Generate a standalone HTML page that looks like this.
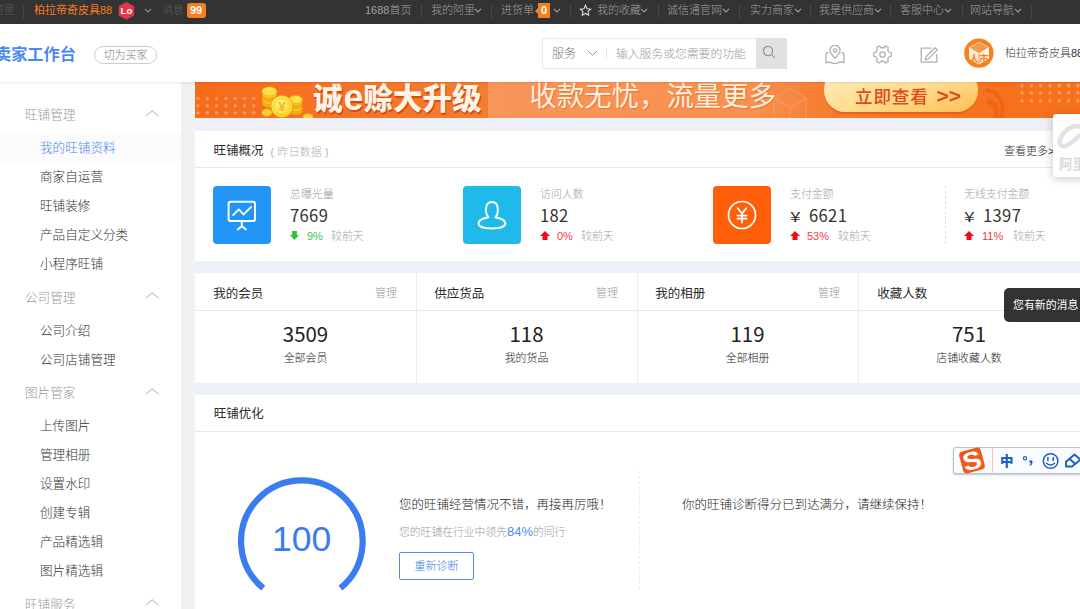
<!DOCTYPE html>
<html lang="zh-CN">
<head>
<meta charset="utf-8">
<title>卖家工作台</title>
<style>
*{box-sizing:border-box;margin:0;padding:0}
html,body{width:1080px;height:609px;overflow:hidden;background:#f0f0f0}
body{font-family:"Liberation Sans","Noto Sans CJK SC",sans-serif;font-size:12.5px;color:#333;position:relative;font-weight:300}
.abs{position:absolute;white-space:nowrap}
/* top bar */
#topbar{position:absolute;left:0;top:0;width:1080px;height:24px;background:#333;color:#a0a0a0;font-size:11px;line-height:24px}
#topbar .t{position:absolute;top:0;white-space:nowrap;line-height:21px}
#topbar .sep{position:absolute;top:5px;width:1px;height:13px;background:#474747}
#topbar svg.cv{position:absolute;top:8px}
/* header */
#header{position:absolute;left:0;top:24px;width:1080px;height:58px;background:#fff;box-shadow:0 1px 2px rgba(0,0,0,.09);z-index:5}
/* sidebar */
#side{position:absolute;left:0;top:82px;width:181px;height:527px;background:#fff}
#side .g{position:absolute;left:25px;color:#999;font-size:12.6px;line-height:20px;white-space:nowrap}
#side .i{position:absolute;left:40px;color:#333;font-size:12.6px;line-height:20px;white-space:nowrap}
#side .act{position:absolute;left:0;width:181px;height:29px;background:#fbfbfd}
#side svg{position:absolute;left:145px}
/* main */
#main{position:absolute;left:194px;top:82px;width:886px;height:527px;background:#edf0f9}
.card{position:absolute;background:#fff}
.hline{position:absolute;left:0;height:1px;background:#e8e8e8}
.vline{position:absolute;top:0;width:1px;background:#ececec}
.g9{color:#999}
.ttl{font-size:12.5px;line-height:18px;color:#2a2a2a;font-weight:400}
.num{font-family:"Noto Sans CJK SC",sans-serif;font-weight:400;font-size:16.6px;letter-spacing:.35px;color:#333;line-height:20px}
.yen{font-family:"Noto Sans CJK SC",sans-serif;font-weight:400;font-size:14px;color:#333;line-height:20px;transform:scaleX(1.38);transform-origin:0 50%}
.lab{font-size:10.900px;color:#a2a2a2;line-height:14px}
.big{font-family:"Noto Sans CJK SC",sans-serif;font-weight:400;font-size:20.4px;color:#222;line-height:24px;text-align:center}
.sm{font-size:10.900px;color:#222;line-height:14px;text-align:center}
</style>
</head>
<body>

<!-- ================= TOP BAR ================= -->
<div id="topbar">
  <span class="t" style="left:-7px;color:#5a5a5a">阿里</span>
  <span class="sep" style="left:23px"></span>
  <span class="t" style="left:34px;color:#fa7a1c;font-weight:400">柏拉帝奇皮具88</span>
  <svg class="abs" style="left:118px;top:1.500px" width="17" height="18" viewBox="0 0 17 18"><polygon points="8.400,1 15.300,4.800 15.300,13 8.400,16.800 1.500,13 1.500,4.800" fill="#e0364a" stroke="#e0364a" stroke-width="1.600" stroke-linejoin="round"/><text x="8.400" y="12.300" font-size="9.500" font-weight="700" fill="#fff" text-anchor="middle" font-family="Liberation Sans, sans-serif">Lo</text></svg>
  <svg class="cv" style="left:144px" width="8" height="6" viewBox="0 0 8 6"><path d="M1 1l3 3 3-3" fill="none" stroke="#888" stroke-width="1.2"/></svg>
  <span class="t" style="left:162px;color:#5a5a5a">消息</span>
  <span class="abs" style="left:186.500px;top:3px;width:19px;height:15px;background:#f7801e;border-radius:3px;color:#fff;font-weight:700;font-size:11px;line-height:15px;text-align:center">99</span>

  <span class="t" style="left:365px">1688首页</span>
  <span class="sep" style="left:421px"></span>
  <span class="t" style="left:431px">我的阿里</span>
  <svg class="cv" style="left:474px" width="8" height="6" viewBox="0 0 8 6"><path d="M1 1l3 3 3-3" fill="none" stroke="#999" stroke-width="1.1"/></svg>
  <span class="sep" style="left:491px"></span>
  <span class="t" style="left:501px">进货单</span>
  <span class="abs" style="left:538px;top:3px;width:12px;height:15px;background:#f7801e;color:#fff;font-weight:700;font-size:11px;line-height:15px;text-align:center">0</span>
  <span class="abs" style="left:535px;top:8px;width:0;height:0;border:3px solid transparent;border-right-color:#f7801e;border-left:0"></span>
  <svg class="cv" style="left:553px" width="8" height="6" viewBox="0 0 8 6"><path d="M1 1l3 3 3-3" fill="none" stroke="#999" stroke-width="1.1"/></svg>
  <span class="sep" style="left:570px"></span>
  <svg class="abs" style="left:579px;top:4px" width="13" height="13" viewBox="0 0 24 24"><path d="M12 2.5l2.9 6.2 6.6.8-4.9 4.6 1.3 6.7L12 17.5l-5.9 3.3 1.3-6.7-4.9-4.6 6.6-.8z" fill="none" stroke="#ddd" stroke-width="2"/></svg>
  <span class="t" style="left:597px">我的收藏</span>
  <svg class="cv" style="left:640px" width="8" height="6" viewBox="0 0 8 6"><path d="M1 1l3 3 3-3" fill="none" stroke="#999" stroke-width="1.1"/></svg>
  <span class="sep" style="left:658px"></span>
  <span class="t" style="left:667px">诚信通官网</span>
  <svg class="cv" style="left:722px" width="8" height="6" viewBox="0 0 8 6"><path d="M1 1l3 3 3-3" fill="none" stroke="#999" stroke-width="1.1"/></svg>
  <span class="sep" style="left:739px"></span>
  <span class="t" style="left:750px">实力商家</span>
  <svg class="cv" style="left:794px" width="8" height="6" viewBox="0 0 8 6"><path d="M1 1l3 3 3-3" fill="none" stroke="#999" stroke-width="1.1"/></svg>
  <span class="sep" style="left:810px"></span>
  <span class="t" style="left:819px">我是供应商</span>
  <svg class="cv" style="left:874px" width="8" height="6" viewBox="0 0 8 6"><path d="M1 1l3 3 3-3" fill="none" stroke="#999" stroke-width="1.1"/></svg>
  <span class="sep" style="left:890px"></span>
  <span class="t" style="left:900px">客服中心</span>
  <svg class="cv" style="left:944px" width="8" height="6" viewBox="0 0 8 6"><path d="M1 1l3 3 3-3" fill="none" stroke="#999" stroke-width="1.1"/></svg>
  <span class="sep" style="left:962px"></span>
  <span class="t" style="left:970px">网站导航</span>
  <svg class="cv" style="left:1014px" width="8" height="6" viewBox="0 0 8 6"><path d="M1 1l3 3 3-3" fill="none" stroke="#999" stroke-width="1.1"/></svg>
  <span class="sep" style="left:1031px"></span>
</div>

<!-- ================= HEADER ================= -->
<div id="header">
  <span class="abs" style="left:-5px;top:19px;font-size:16.2px;font-weight:700;color:#4a88f4;line-height:22px">卖家工作台</span>
  <span class="abs" style="left:94px;top:22px;width:63px;height:18px;border:1px solid #cdcdcd;border-radius:9px;font-size:10.900px;color:#7a7a7a;line-height:16px;text-align:center">切为买家</span>

  <div class="abs" style="left:542px;top:13.500px;width:245px;height:31.500px;border:1px solid #ebebeb;background:#fff"></div>
  <span class="abs" style="left:552px;top:21px;font-size:12px;color:#777;line-height:18px">服务</span>
  <svg class="abs" style="left:587px;top:26px" width="11" height="7" viewBox="0 0 11 7"><path d="M0.800 0.800l4.700 4.500 4.700-4.500" fill="none" stroke="#9a9a9a" stroke-width="1"/></svg>
  <span class="abs" style="left:606px;top:25px;width:1px;height:9px;background:#e6e6e6"></span>
  <span class="abs" style="left:616px;top:21px;font-size:11.8px;color:#999;line-height:18px">输入服务或您需要的功能</span>
  <div class="abs" style="left:756px;top:13.500px;width:31px;height:31.500px;background:#e1e1e1"></div>
  <svg class="abs" style="left:761.500px;top:20.500px" width="14" height="14" viewBox="0 0 14 14"><circle cx="6" cy="6" r="4.600" fill="none" stroke="#909090" stroke-width="1.200"/><path d="M9.400 9.400l3.200 3.200" stroke="#909090" stroke-width="1.200"/></svg>

  <!-- map icon -->
  <svg class="abs" style="left:824px;top:21px" width="23" height="21" viewBox="0 0 23 21"><g fill="none" stroke="#b0b0b0" stroke-width="1.300" stroke-linejoin="round" stroke-linecap="round"><path d="M11 13.200C8 9.800 5.900 7.600 5.900 5.400a5.100 5.100 0 0 1 10.200 0c0 2.200-2.100 4.400-5.100 7.800z"/><circle cx="11" cy="5.500" r="1.700"/><path d="M4.300 7.600C2.800 7.700 2 8.400 2 9.600v8.300c2-.9 4-.9 6 0 2.200 1 4.200.8 6-.2 2-.9 4-.9 6-.1V9.600c0-1.200-.8-1.900-2.300-2"/></g></svg>
  <!-- gear -->
  <svg class="abs" style="left:872px;top:20px" width="21" height="21" viewBox="0 0 21 21"><g fill="none" stroke="#b0b0b0" stroke-width="1.300" stroke-linejoin="round"><path d="M17.02 8.25 L19.36 8.94 L19.36 12.06 L17.02 12.75 L15.71 15.03 L16.29 17.39 L13.58 18.96 L11.82 17.27 L9.18 17.27 L7.42 18.96 L4.71 17.39 L5.29 15.03 L3.98 12.75 L1.64 12.06 L1.64 8.94 L3.98 8.25 L5.29 5.97 L4.71 3.61 L7.42 2.04 L9.18 3.73 L11.82 3.73 L13.58 2.04 L16.29 3.61 L15.71 5.97z"/><circle cx="10.500" cy="10.500" r="2.700"/></g></svg>
  <!-- edit -->
  <svg class="abs" style="left:920px;top:22.500px" width="19" height="17" viewBox="0 0 19 17"><g fill="none" stroke="#b0b0b0" stroke-width="1.300" stroke-linejoin="round" stroke-linecap="round"><path d="M11 1.200H1.200v14h15.600V7.500"/><path d="M15 .8l2.300 2.100-9 9-3.100.9.800-3z"/></g></svg>
  <!-- avatar -->
  <svg class="abs" style="left:964px;top:14px" width="30" height="30" viewBox="0 0 30 30"><circle cx="14.900" cy="15.100" r="14.700" fill="#f5811f"/><path d="M15 4.200l10 5.400-10 5.900-10-5.900z" fill="#f7994a" stroke="#fde2c8" stroke-width=".8" stroke-linejoin="round"/><path d="M5 9.600l10 5.900v11l-10-5.800z" fill="#fdebd9"/><path d="M15 15.500l10-5.900v11.100l-10 5.800z" fill="#fff1e4"/><path d="M15 15.500v11" stroke="#f5811f" stroke-width=".8"/><text x="10.200" y="23.600" font-size="9.500" font-weight="700" fill="#f5811f" text-anchor="middle" font-family="Liberation Sans, Noto Sans CJK SC, sans-serif">人</text><text x="19.900" y="23.600" font-size="9.500" font-weight="700" fill="#f5811f" text-anchor="middle" font-family="Liberation Sans, Noto Sans CJK SC, sans-serif">市</text></svg>
  <span class="abs" style="left:1005px;top:21px;font-size:11px;color:#333;line-height:16px">柏拉帝奇皮具88</span>
</div>

<!-- ================= SIDEBAR ================= -->
<div id="side">
  <span class="g" style="top:23px">旺铺管理</span>
  <svg style="top:27px" width="15" height="9" viewBox="0 0 15 9"><path d="M0.600 7.400l6.600-5.600 6.600 5.600" fill="none" stroke="#c6c6c6" stroke-width="1.200"/></svg>
  <div class="act" style="top:51px"></div>
  <span class="i" style="top:56px;color:#4a86f2">我的旺铺资料</span>
  <span class="i" style="top:85px">商家自运营</span>
  <span class="i" style="top:114px">旺铺装修</span>
  <span class="i" style="top:143px">产品自定义分类</span>
  <span class="i" style="top:172px">小程序旺铺</span>

  <span class="g" style="top:206px">公司管理</span>
  <svg style="top:209px" width="15" height="9" viewBox="0 0 15 9"><path d="M0.600 7.400l6.600-5.600 6.600 5.600" fill="none" stroke="#c6c6c6" stroke-width="1.200"/></svg>
  <span class="i" style="top:239px">公司介绍</span>
  <span class="i" style="top:268px">公司店铺管理</span>

  <span class="g" style="top:301px">图片管家</span>
  <svg style="top:305px" width="15" height="9" viewBox="0 0 15 9"><path d="M0.600 7.400l6.600-5.600 6.600 5.600" fill="none" stroke="#c6c6c6" stroke-width="1.200"/></svg>
  <span class="i" style="top:334px">上传图片</span>
  <span class="i" style="top:363px">管理相册</span>
  <span class="i" style="top:392px">设置水印</span>
  <span class="i" style="top:421px">创建专辑</span>
  <span class="i" style="top:450px">产品精选辑</span>
  <span class="i" style="top:479px">图片精选辑</span>

  <span class="g" style="top:513.300px">旺铺服务</span>
  <svg style="top:516px" width="15" height="9" viewBox="0 0 15 9"><path d="M0.600 7.400l6.600-5.600 6.600 5.600" fill="none" stroke="#c6c6c6" stroke-width="1.200"/></svg>
</div>

<!-- ================= MAIN ================= -->
<div class="abs" style="left:192.500px;top:82px;width:2px;height:527px;background:#f1f3f9"></div>
<div id="main">
  <!-- banner : main origin is (194,82) -->
  <div id="banner" class="abs" style="left:1px;top:0;width:885px;height:36px;overflow:hidden;background:linear-gradient(90deg,#f66b1c 0,#f67c31 293px,#f8955a 293px,#f8914f 560px,#f78640 600px,#f77a2a 640px,#f7711d 800px,#f7711d 885px)">
    <svg class="abs" style="left:0;top:0" width="885" height="36" viewBox="0 0 885 36">
      <defs>
        <linearGradient id="btn" x1="0" y1="0" x2="1" y2="1"><stop offset="0" stop-color="#ffefc4"/><stop offset=".55" stop-color="#ffdc8e"/><stop offset="1" stop-color="#ffbe55"/></linearGradient>
        <radialGradient id="coin" cx="0.4" cy="0.35" r="0.75"><stop offset="0" stop-color="#fff47c"/><stop offset="1" stop-color="#ffd21e"/></radialGradient>
      </defs>
      <g fill="#f9a465" opacity=".85"><circle cx="3.0" cy="16.6" r="1.700"/><circle cx="12.3" cy="16.6" r="1.700"/><circle cx="21.6" cy="16.6" r="1.700"/><circle cx="30.9" cy="16.6" r="1.700"/><circle cx="40.2" cy="16.6" r="1.700"/><circle cx="49.5" cy="16.6" r="1.700"/><circle cx="58.8" cy="16.6" r="1.700"/><circle cx="3.0" cy="23.7" r="1.700"/><circle cx="12.3" cy="23.7" r="1.700"/><circle cx="21.6" cy="23.7" r="1.700"/><circle cx="30.9" cy="23.7" r="1.700"/><circle cx="40.2" cy="23.7" r="1.700"/><circle cx="49.5" cy="23.7" r="1.700"/><circle cx="58.8" cy="23.7" r="1.700"/><circle cx="3.0" cy="31" r="1.700"/><circle cx="12.3" cy="31" r="1.700"/><circle cx="21.6" cy="31" r="1.700"/><circle cx="30.9" cy="31" r="1.700"/><circle cx="40.2" cy="31" r="1.700"/><circle cx="49.5" cy="31" r="1.700"/><circle cx="58.8" cy="31" r="1.700"/><circle cx="827.0" cy="3.6" r="1.800"/><circle cx="836.3" cy="3.6" r="1.800"/><circle cx="845.6" cy="3.6" r="1.800"/><circle cx="854.9" cy="3.6" r="1.800"/><circle cx="864.2" cy="3.6" r="1.800"/><circle cx="873.5" cy="3.6" r="1.800"/><circle cx="882.8" cy="3.6" r="1.800"/><circle cx="827.0" cy="10.8" r="1.800"/><circle cx="836.3" cy="10.8" r="1.800"/><circle cx="845.6" cy="10.8" r="1.800"/><circle cx="854.9" cy="10.8" r="1.800"/><circle cx="864.2" cy="10.8" r="1.800"/><circle cx="873.5" cy="10.8" r="1.800"/><circle cx="882.8" cy="10.8" r="1.800"/><circle cx="827.0" cy="18.9" r="1.800"/><circle cx="836.3" cy="18.9" r="1.800"/><circle cx="845.6" cy="18.9" r="1.800"/><circle cx="854.9" cy="18.9" r="1.800"/><circle cx="864.2" cy="18.9" r="1.800"/><circle cx="873.5" cy="18.9" r="1.800"/><circle cx="882.8" cy="18.9" r="1.800"/></g>
      <g stroke="#ec9a08" stroke-width="0.600"><ellipse cx="71.900" cy="30.600" rx="5.200" ry="3.800" fill="#fbd02f"/><ellipse cx="74.4" cy="21.5" rx="7.2" ry="4" fill="#f5ae0e"/><ellipse cx="74.4" cy="18.5" rx="7.2" ry="4" fill="#fbc828"/><ellipse cx="74.4" cy="15.5" rx="7.2" ry="4" fill="#f5ae0e"/><ellipse cx="74.4" cy="12.5" rx="7.2" ry="4" fill="#fbc828"/><ellipse cx="74.4" cy="9.4" rx="7.5" ry="4.6" fill="#ffe247"/><ellipse cx="100.6" cy="29.5" rx="6.6" ry="3.3" fill="#f5ae0e"/><ellipse cx="100.6" cy="26.5" rx="6.6" ry="3.3" fill="#fbc828"/><ellipse cx="100.6" cy="23.5" rx="6.6" ry="3.3" fill="#f5ae0e"/><ellipse cx="100.6" cy="20.5" rx="6.6" ry="3.3" fill="#fbc828"/><ellipse cx="100.6" cy="17.5" rx="6.9" ry="3.9" fill="#ffe247"/>
        <ellipse cx="113" cy="34.600" rx="5.200" ry="3" fill="#fbd034"/>
        <circle cx="86.900" cy="24.400" r="11" fill="url(#coin)" stroke="#ef9f06" stroke-width=".8"/>
      </g>
      <circle cx="86.900" cy="24.400" r="8.200" fill="none" stroke="#f6c21a" stroke-width=".9" opacity=".8"/>
      <text x="86.900" y="29.300" font-size="13" font-weight="700" fill="#f2b010" opacity=".85" text-anchor="middle" font-family="Liberation Sans, sans-serif">¥</text>
      <!-- faint cube -->
      <g fill="none" stroke="#fab07c" stroke-width="1.800" opacity=".3"><path d="M579 16l16-9.500 16 9.500-16 9.500z"/><path d="M579 16v20M611 16v20M595 25.500v12"/></g>
      <!-- swirl right of the button -->
      <g fill="none" stroke="#ec5b16" opacity=".6" stroke-linecap="round"><path d="M792 8c12 2 19 13 14 28" stroke-width="4"/><path d="M794 20c6 1 9 7 7 16" stroke-width="5"/></g>
      <!-- button -->
      <rect x="629" y="-12" width="154" height="44" rx="21" fill="#e55a10" opacity=".7"/>
      <rect x="629" y="-14" width="154" height="44" rx="21" fill="url(#btn)"/>
    </svg>
    <span class="abs" style="left:118px;top:-3.500px;font-size:29.500px;font-weight:900;color:#fff4e6;line-height:40px;text-shadow:1px 2px 0 #d8490f,0 1px 1px #d8490f">诚<span style="font-weight:700;font-size:36px;margin:0 0 0 1px;line-height:20px;position:relative;top:1px">e</span>赊大升级</span>
    <span class="abs" style="left:334.500px;top:-5.200px;font-size:27.400px;font-weight:400;color:#fff0e0;line-height:40px;text-shadow:1px 1px 1px rgba(226,90,20,.55)">收款无忧，流量更多</span>
    <span class="abs" style="left:660px;top:-2.500px;font-size:17.600px;font-weight:500;color:#e6461a;line-height:32px;letter-spacing:.8px">立即查看<span style="font-weight:700;font-size:21px;margin-left:8px;letter-spacing:0;position:relative;top:.5px">&gt;&gt;</span></span>
  </div>

  <!-- card 1 : overview -->
  <div class="card" style="left:1px;top:49px;width:885px;height:130px">
    <span class="abs ttl" style="left:18.500px;top:11px">旺铺概况</span>
    <span class="abs" style="left:75.500px;top:12.500px;font-size:10.800px;line-height:16px;color:#b0b0b0;letter-spacing:.25px">( 昨日数据 )</span>
    <span class="abs" style="left:809px;top:12px;font-size:11px;line-height:16px;color:#333">查看更多&gt;</span>
    <div class="hline" style="top:36px;width:885px"></div>

    <!-- stat 1 -->
    <div class="abs" style="left:18px;top:55px;width:58px;height:58px;border-radius:4px;background:#2196f6"></div>
    <svg class="abs" style="left:32px;top:69px" width="30" height="32" viewBox="0 0 30 32"><g fill="none" stroke="#fff" stroke-width="2" stroke-linecap="round" stroke-linejoin="round"><rect x="1.600" y="1.700" width="26.400" height="19.300" rx="2"/><path d="M6.200 15l5.700-5.700 4.600 5.200L24 7" stroke-width="1.800"/><path d="M14.800 21.500v4.500M14.800 26l-4 3.400M14.800 26l4 3.400"/></g></svg>
    <span class="abs lab" style="left:95px;top:56px">总曝光量</span>
    <span class="abs num" style="left:95px;top:73.700px">7669</span>
    <svg class="abs" style="left:95px;top:99.500px" width="9" height="9" viewBox="0 0 9 9"><path d="M2.100 0h4.800v4H9L4.500 9 0 4h2.100z" fill="#2cc52f"/></svg>
    <span class="abs" style="left:112px;top:98px;font-size:11px;line-height:14px;color:#3cc83f">9%</span>
    <span class="abs lab" style="left:136px;top:98px">较前天</span>

    <!-- stat 2 -->
    <div class="abs" style="left:268px;top:55px;width:58px;height:58px;border-radius:4px;background:#1fb9ea"></div>
    <svg class="abs" style="left:281px;top:68.700px" width="32" height="32" viewBox="0 0 32 32"><path d="M15.900 2C12.300 2 10.100 4.600 10.100 8.200v3.400c0 2.500 1 4.500 2.300 5.700-5 1-9.900 2.900-9.900 6.300 0 3.100 6 4.900 13.400 4.900s13.400-1.800 13.400-4.900c0-3.400-4.900-5.300-9.900-6.300 1.300-1.200 2.300-3.200 2.300-5.700V8.200C21.700 4.600 19.500 2 15.900 2z" fill="none" stroke="#fff" stroke-width="1.900" stroke-linejoin="round"/></svg>
    <span class="abs lab" style="left:345px;top:56px">访问人数</span>
    <span class="abs num" style="left:345px;top:73.700px">182</span>
    <svg class="abs" style="left:345px;top:100px" width="10" height="9" viewBox="0 0 10 9"><path d="M5 0l5 5H7.500v4H2.500V5H0z" fill="#f00a14"/></svg>
    <span class="abs" style="left:362px;top:98px;font-size:11px;line-height:14px;color:#f03c44">0%</span>
    <span class="abs lab" style="left:386px;top:98px">较前天</span>

    <!-- stat 3 -->
    <div class="abs" style="left:518px;top:55px;width:58px;height:58px;border-radius:4px;background:#ff5f0a"></div>
    <svg class="abs" style="left:532.300px;top:69px" width="30" height="30" viewBox="0 0 30 30"><circle cx="15" cy="15" r="13.500" fill="none" stroke="#fff" stroke-width="1.700"/><g stroke="#fff" stroke-width="1.800" fill="none" stroke-linecap="round" stroke-linejoin="round"><path d="M10.700 8.200l4.300 5.400 4.300-5.400M15 13.600v8.900M10.400 15.600h9.200M10.400 18.600h9.200"/></g></svg>
    <span class="abs lab" style="left:595px;top:56px">支付金额</span>
    <span class="abs yen" style="left:595px;top:74.500px">¥</span><span class="abs num" style="left:614px;top:73.700px">6621</span>
    <svg class="abs" style="left:595px;top:100px" width="10" height="9" viewBox="0 0 10 9"><path d="M5 0l5 5H7.500v4H2.500V5H0z" fill="#f00a14"/></svg>
    <span class="abs" style="left:612px;top:98px;font-size:11px;line-height:14px;color:#f03c44">53%</span>
    <span class="abs lab" style="left:643px;top:98px">较前天</span>

    <div class="abs" style="left:750px;top:55px;width:0;height:58px;border-left:1px dashed #e2e2e2"></div>
    <!-- stat 4 -->
    <span class="abs lab" style="left:769px;top:56px">无线支付金额</span>
    <span class="abs yen" style="left:769px;top:74.500px">¥</span><span class="abs num" style="left:788px;top:73.700px">1397</span>
    <svg class="abs" style="left:769px;top:100px" width="10" height="9" viewBox="0 0 10 9"><path d="M5 0l5 5H7.500v4H2.500V5H0z" fill="#f00a14"/></svg>
    <span class="abs" style="left:787px;top:98px;font-size:11px;line-height:14px;color:#f03c44">11%</span>
    <span class="abs lab" style="left:818px;top:98px">较前天</span>
  </div>

  <!-- card 2 : four columns -->
  <div class="card" style="left:1px;top:191px;width:885px;height:110px">
    <div class="hline" style="top:37px;width:885px"></div>
    <div class="vline" style="left:221px;height:110px"></div>
    <div class="vline" style="left:442px;height:110px"></div>
    <div class="vline" style="left:663px;height:110px"></div>

    <span class="abs ttl" style="left:18.3px;top:11.500px">我的会员</span>
    <span class="abs g9" style="left:180px;top:12px;font-size:11px;line-height:16px">管理</span>
    <div class="abs big" style="left:0;top:48.4px;width:221px">3509</div>
    <div class="abs sm" style="left:0;top:78px;width:221px">全部会员</div>

    <span class="abs ttl" style="left:239.3px;top:11.500px">供应货品</span>
    <span class="abs g9" style="left:401px;top:12px;font-size:11px;line-height:16px">管理</span>
    <div class="abs big" style="left:221px;top:48.4px;width:221px">118</div>
    <div class="abs sm" style="left:221px;top:78px;width:221px">我的货品</div>

    <span class="abs ttl" style="left:460.3px;top:11.500px">我的相册</span>
    <span class="abs g9" style="left:623px;top:12px;font-size:11px;line-height:16px">管理</span>
    <div class="abs big" style="left:442px;top:48.4px;width:221px">119</div>
    <div class="abs sm" style="left:442px;top:78px;width:221px">全部相册</div>

    <span class="abs ttl" style="left:682.3px;top:11.500px">收藏人数</span>
    <div class="abs big" style="left:663px;top:48.4px;width:222px">751</div>
    <div class="abs sm" style="left:663px;top:78px;width:222px">店铺收藏人数</div>
  </div>

  <!-- card 3 : optimisation -->
  <div class="card" style="left:1px;top:313px;width:885px;height:214px">
    <span class="abs ttl" style="left:18.700px;top:10.300px">旺铺优化</span>
    <div class="hline" style="top:36px;width:885px"></div>

    <svg class="abs" style="left:36px;top:77.500px" width="142" height="139" viewBox="0 0 142 139">
      <path d="M32.260 115.130A60.800 60.800 0 1 1 109.440 115.130" fill="none" stroke="#3b7cf1" stroke-width="6.200"/>
      <text x="70.600" y="77.600" font-size="35.500" fill="#3b7cf1" text-anchor="middle" font-family="Liberation Sans, sans-serif">100</text>
    </svg>

    <span class="abs" style="left:204px;top:101px;font-size:12.500px;line-height:18px;color:#222">您的旺铺经营情况不错，再接再厉哦！</span>
    <span class="abs g9" style="left:204px;top:127px;font-size:10.800px;line-height:20px">您的旺铺在行业中领先<span style="color:#4b8cf4;font-size:13px">84%</span>的同行</span>
    <span class="abs" style="left:204px;top:157px;width:75px;height:28px;border:1px solid #4a8af4;border-radius:2px;font-size:11px;line-height:26px;color:#3b7cf1;text-align:center">重新诊断</span>

    <div class="abs" style="left:444px;top:76px;width:0;height:118px;border-left:1px dashed #ececec"></div>
    <span class="abs" style="left:487px;top:101px;font-size:12.500px;line-height:18px;color:#222">你的旺铺诊断得分已到达满分，请继续保持！</span>
  </div>
</div>

<!-- ================= FLOATING BITS ================= -->
<!-- alibaba float -->
<div class="abs" style="left:1053px;top:114px;width:40px;height:62.500px;background:#fff;border-radius:3px;box-shadow:-1px 2px 9px rgba(0,0,0,.2)">
  <svg class="abs" style="left:0;top:0" width="27" height="65" viewBox="0 0 27 65">
    <path d="M30 14C22 9 12 15 7.500 24c-2.500 5.500 0 9 4.500 8 6-1.500 10-7 18-13" fill="none" stroke="#e3e3e3" stroke-width="4.500" stroke-linecap="round"/>
    <text x="6" y="55" font-size="13.500" font-weight="700" fill="#dadada" font-family="Liberation Sans, Noto Sans CJK SC, sans-serif">阿里</text>
  </svg>
</div>

<!-- tooltip -->
<div class="abs" style="left:1004px;top:288px;width:90px;height:34px;background:#333;border-radius:5px;color:#fff;font-size:10.900px;font-weight:400;line-height:35px;padding-left:9px">您有新的消息</div>

<!-- IME bar -->
<div class="abs" style="left:953px;top:447px;width:140px;height:27px;background:#f9fbff;border:1px solid #b9c3d3;border-radius:3px;box-shadow:0 1px 2px rgba(60,80,120,.35)"></div>
<svg class="abs" style="left:953px;top:445px" width="127" height="32" viewBox="0 0 127 32">
  <g transform="rotate(-15 19 15.500)">
    <rect x="7.800" y="4.300" width="22.400" height="22.400" rx="4" fill="#f1581d"/>
    <text x="19" y="24.300" font-size="25" font-weight="700" fill="#fff" text-anchor="middle" font-family="Liberation Sans, sans-serif" transform="translate(19 0) scale(1.12 1) translate(-19 0)">S</text>
  </g>
  <path d="M39.500 3v26" stroke="#f6c7b3" stroke-width="1"/>
  <text x="53.800" y="21" font-size="13.500" font-weight="900" fill="#1b5fc1" text-anchor="middle" font-family="Liberation Sans, Noto Sans CJK SC, sans-serif">中</text>
  <circle cx="72" cy="13.300" r="1.600" fill="none" stroke="#1b5fc1" stroke-width="1.200"/>
  <path d="M77.300 15.200q2.400-.2 2.300 2.200-.2 2.400-2.700 3.300l-.4-.8q1.200-.6 1.300-1.600-1.500-.1-1.500-1.500 0-1.500 1-1.600z" fill="#1b5fc1"/>
  <circle cx="97.600" cy="16" r="7.300" fill="none" stroke="#1b5fc1" stroke-width="1.500"/>
  <path d="M94.900 12.500v3M100.300 12.500v3" stroke="#1b5fc1" stroke-width="1.500" stroke-linecap="round"/>
  <path d="M93.600 18.300q4 3.600 8 0" fill="none" stroke="#1b5fc1" stroke-width="1.400" stroke-linecap="round"/>
  <path d="M113 21.500v-4.800l8.500-7.200 6 5.200-8.500 6.800zM116.500 13.800l5.500 5" fill="none" stroke="#1b5fc1" stroke-width="1.900" stroke-linejoin="round"/>
</svg>

</body>
</html>
